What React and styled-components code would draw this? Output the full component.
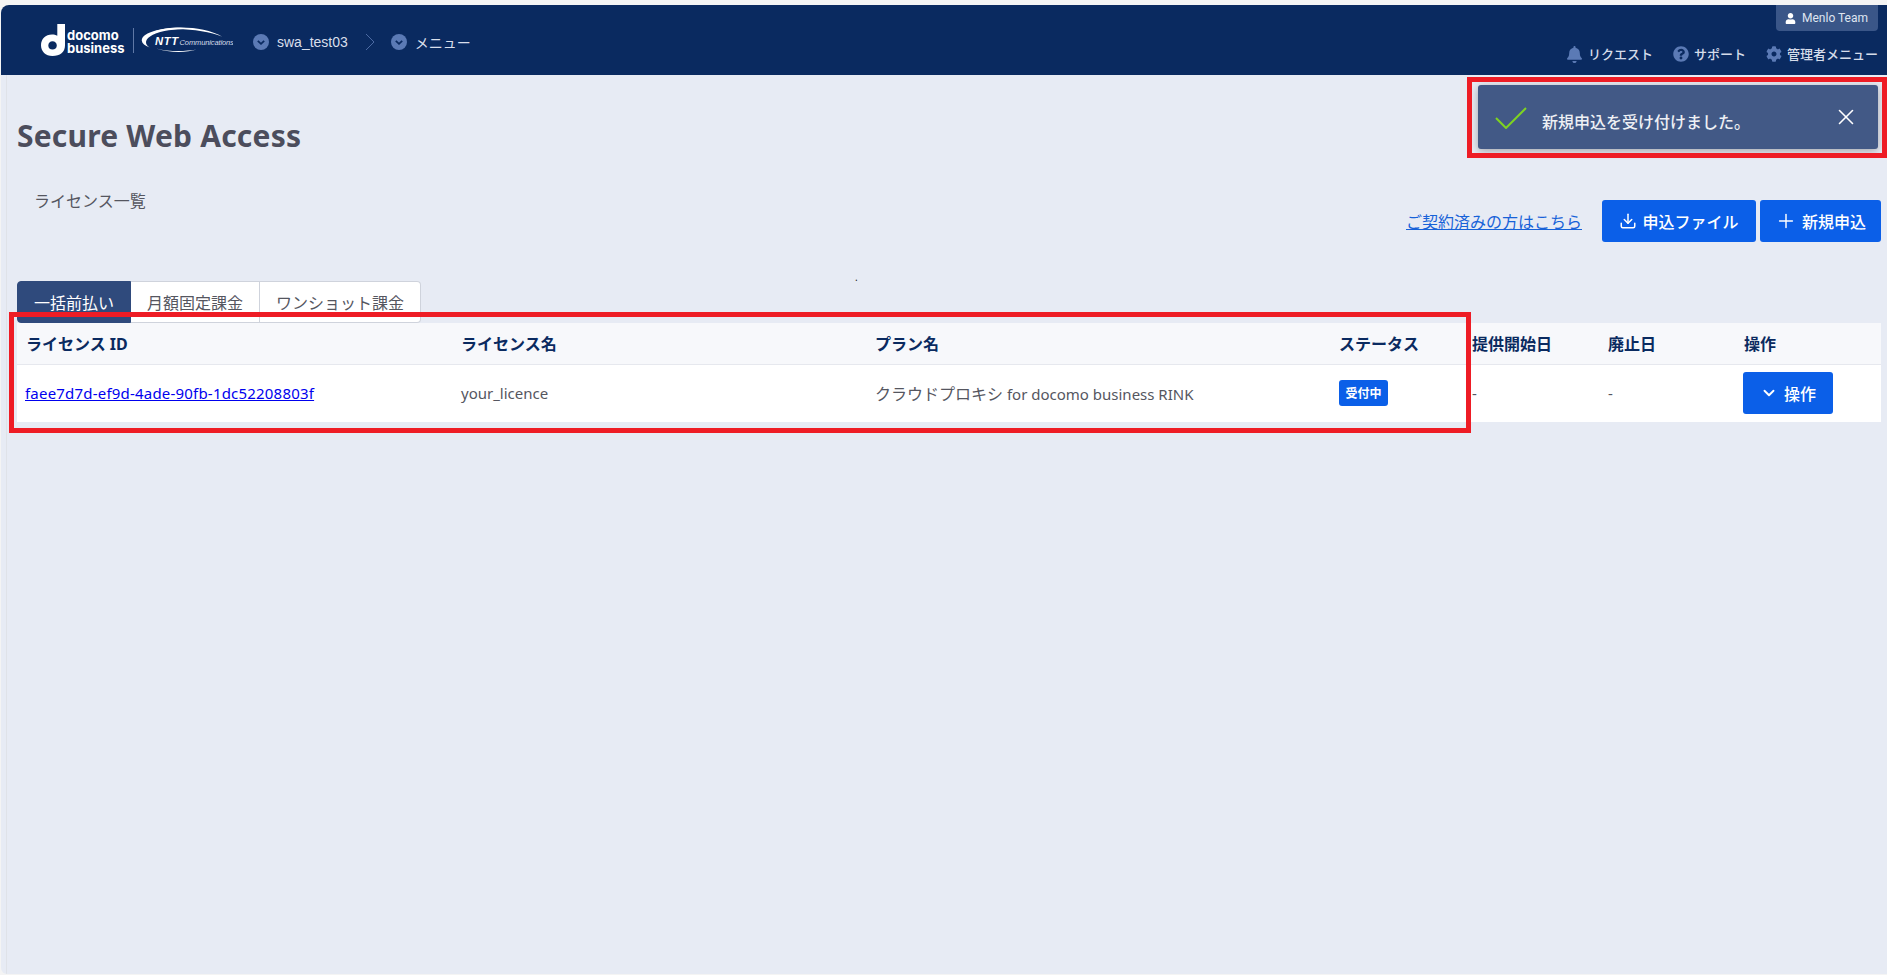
import styled, { createGlobalStyle } from "styled-components";
import { Download, Plus, ChevronDown, X } from "lucide-react";
import { FaBell, FaQuestionCircle, FaCog, FaUser } from "react-icons/fa";

const sans = `"Noto Sans", "Noto Sans CJK JP", sans-serif`;

const columns = [
  { label: "ライセンス ID", width: 435 },
  { label: "ライセンス名", width: 414 },
  { label: "プラン名", width: 464 },
  { label: "ステータス", width: 133 },
  { label: "提供開始日", width: 136 },
  { label: "廃止日", width: 136 },
  { label: "操作", width: 146 },
];

const tabs = ["一括前払い", "月額固定課金", "ワンショット課金"];

function CircleChevron() {
  return (
    <svg width="16" height="16" viewBox="0 0 16 16">
      <circle cx="8" cy="8" r="8" fill="#5b7ab5" />
      <path d="M4.8 6.8 8 9.8l3.2-3" fill="none" stroke="#0a2a60" strokeWidth="1.8" />
    </svg>
  );
}

function DocomoMark() {
  return (
    <svg width="24" height="32" viewBox="0 0 24 32">
      <path
        d="M11 10.5c2 0 3.700.4 5.300 1.300V0H24v21.500C24 28 19 32 11.500 32 4.500 32 0 27.500 0 21.300 0 15 4.500 10.500 11 10.500Zm.5 6.700c-2.500 0-4.200 1.800-4.200 4.200s1.700 4.100 4.200 4.100 4.300-1.700 4.300-4.100-1.800-4.200-4.300-4.200Z"
        fill="#fff"
        fillRule="evenodd"
      />
    </svg>
  );
}

function NttLogo() {
  return (
    <svg width="94" height="28" viewBox="0 0 88 26">
      <path
        d="M10 20C1 17 0 11 8 7 20 1 44 0 60 4 50 2 26 2 13 8 5 12 5 17 10 20Z"
        fill="#fff"
      />
      <path d="M14 5C30-1 62 0 78 10 62 3 32 1 14 5Z" fill="#fff" />
      <path d="M16 21C28 25 44 25 54 22 42 24 28 24 16 21Z" fill="#fff" />
      <text x="15" y="18" fontFamily="Liberation Sans" fontSize="10.500" fontWeight="700" fontStyle="italic" fill="#fff" letterSpacing="0.600">
        NTT
      </text>
      <text x="38" y="18" fontFamily="Liberation Sans" fontSize="7" fontStyle="italic" fill="#d6dcea" letterSpacing="-0.100">
        Communications
      </text>
    </svg>
  );
}

export default function App() {
  return (
    <>
      <GlobalStyle />
      <Page>
        <Header>
          <Brand>
            <DocomoMark />
            <BrandText>
              docomo
              <br />
              business
            </BrandText>
            <BrandDivider />
            <NttLogo />
          </Brand>
          <BreadcrumbNav>
            <CircleChevron />
            <NavLabel>swa_test03</NavLabel>
            <NavSeparator width="10" height="18" viewBox="0 0 10 18">
              <path d="M1 1l8 8-8 8" fill="none" stroke="#4c6aa3" strokeWidth="1" />
            </NavSeparator>
            <CircleChevron />
            <NavLabel>メニュー</NavLabel>
          </BreadcrumbNav>
          <HeaderRight>
            <UserChip>
              <FaUser size={11} color="#fff" />
              Menlo Team
            </UserChip>
            <HeaderLinks>
              <HeaderLink>
                <FaBell size={17} />
                <span>リクエスト</span>
              </HeaderLink>
              <HeaderLink>
                <FaQuestionCircle size={16} />
                <span>サポート</span>
              </HeaderLink>
              <HeaderLink>
                <FaCog size={16} />
                <span>管理者メニュー</span>
              </HeaderLink>
            </HeaderLinks>
          </HeaderRight>
        </Header>

        <Main>
          <Title>Secure Web Access</Title>
          <Toolbar>
            <Crumb>ライセンス一覧</Crumb>
            <Actions>
              <ContractLink href="#">ご契約済みの方はこちら</ContractLink>
              <PrimaryButton $width={154}>
                <Download size={18} strokeWidth={2} />
                申込ファイル
              </PrimaryButton>
              <PrimaryButton $width={121}>
                <Plus size={22} strokeWidth={1.600} />
                新規申込
              </PrimaryButton>
            </Actions>
          </Toolbar>
          <DotRow>.</DotRow>
          <Tabs>
            {tabs.map((tab, i) => (
              <Tab key={tab} $active={i === 0}>
                {tab}
              </Tab>
            ))}
          </Tabs>
          <Table>
            <colgroup>
              {columns.map((c) => (
                <Col key={c.label} $width={c.width} />
              ))}
            </colgroup>
            <thead>
              <tr>
                {columns.map((c) => (
                  <Th key={c.label}>{c.label}</Th>
                ))}
              </tr>
            </thead>
            <tbody>
              <tr>
                <Td>
                  <IdLink href="#">faee7d7d-ef9d-4ade-90fb-1dc52208803f</IdLink>
                </Td>
                <Td>your_licence</Td>
                <Td>
                  <Kana>クラウドプロキシ</Kana> for docomo business RINK
                </Td>
                <Td>
                  <Badge>受付中</Badge>
                </Td>
                <Td>-</Td>
                <Td>-</Td>
                <Td>
                  <RowButton>
                    <ChevronDown size={18} strokeWidth={2.500} />
                    操作
                  </RowButton>
                </Td>
              </tr>
            </tbody>
          </Table>
        </Main>

        <Toast>
          <svg width="32" height="22" viewBox="0 0 32 22">
            <path d="M1 11l10 10L31 1" fill="none" stroke="#7ed321" strokeWidth="2" />
          </svg>
          <ToastText>新規申込を受け付けました。</ToastText>
          <ToastClose>
            <X size={26} strokeWidth={1.500} />
          </ToastClose>
        </Toast>
        <Highlight $left={1467} $top={77} $width={420} $height={81} />
        <Highlight $left={9} $top={312} $width={1462} $height={121} />
      </Page>
    </>
  );
}

const GlobalStyle = createGlobalStyle`
  html, body {
    margin: 0;
    padding: 0;
    background: #f4f4f4;
  }
  * {
    box-sizing: border-box;
  }
`;

const Page = styled.div`
  position: relative;
  display: flex;
  flex-direction: column;
  width: 1887px;
  height: 975px;
  padding: 5px 0 1px 1px;
  overflow: hidden;
  font-family: ${sans};
`;

const Header = styled.header`
  display: flex;
  flex: none;
  height: 70px;
  padding-left: 40px;
  background: #0a2a60;
  border-top-left-radius: 8px;
`;

const Brand = styled.div`
  display: flex;
  align-items: center;
  height: 70px;
`;

const BrandText = styled.div`
  width: 63px;
  margin-left: 2px;
  padding-top: 3px;
  font-family: "Inter", sans-serif;
  font-size: 13px;
  font-weight: 700;
  line-height: 13px;
  color: #fff;
`;

const BrandDivider = styled.div`
  width: 1px;
  height: 25px;
  margin: 0 5px 0 3px;
  background: #5f78a6;
`;

const BreadcrumbNav = styled.nav`
  display: flex;
  align-items: center;
  gap: 8px;
  margin-left: 20px;
  padding-top: 4px;
  height: 70px;
`;

const NavLabel = styled.span`
  font-family: "Liberation Sans", "Noto Sans CJK JP", sans-serif;
  font-size: 14px;
  color: #d9dfeb;
`;

const NavSeparator = styled.svg`
  margin: 0 8px 0 9px;
`;

const HeaderRight = styled.div`
  display: flex;
  flex-direction: column;
  align-items: flex-end;
  margin-left: auto;
  padding-right: 9px;
`;

const UserChip = styled.div`
  display: flex;
  align-items: center;
  gap: 6px;
  width: 102px;
  height: 26px;
  padding-left: 9px;
  background: #3a5688;
  border-radius: 0 0 4px 4px;
  font-family: "Roboto", sans-serif;
  font-size: 12px;
  color: #dfe5f0;
`;

const HeaderLinks = styled.div`
  display: flex;
  align-items: center;
  gap: 20px;
  margin-top: 13px;
`;

const HeaderLink = styled.div`
  display: flex;
  align-items: center;
  gap: 5px;
  font-size: 13px;
  font-weight: 500;
  color: #d5dcea;
  line-height: 20px;
  svg {
    color: #5b7ab5;
  }
`;

const Main = styled.main`
  flex: 1;
  padding: 41px 6px 0 16px;
  background: linear-gradient(
    to right,
    #e7ebf4 5px,
    #dfe2e8 5px,
    #dfe2e8 6px,
    #e7ebf4 6px
  );
  border-bottom-left-radius: 6px;
`;

const Title = styled.h1`
  margin: 0;
  font-size: 30px;
  font-weight: 700;
  line-height: 40px;
  letter-spacing: 0.200px;
  color: #4c4d5c;
`;

const Toolbar = styled.div`
  display: flex;
  justify-content: space-between;
  margin-top: 33px;
`;

const Crumb = styled.div`
  padding-left: 17px;
  font-size: 16px;
  line-height: 24px;
  color: #55565f;
`;

const Actions = styled.div`
  display: flex;
  align-items: center;
  gap: 4px;
  margin-top: 11px;
`;

const ContractLink = styled.a`
  margin-right: 16px;
  font-size: 16px;
  color: #1762d8;
  text-decoration: underline;
`;

const PrimaryButton = styled.button`
  display: flex;
  align-items: center;
  justify-content: center;
  gap: 5px;
  width: ${(props) => props.$width}px;
  height: 42px;
  padding: 0;
  border: none;
  border-radius: 3px;
  background: #0b5fe8;
  color: #fff;
  font-family: ${sans};
  font-size: 16px;
  font-weight: 500;
`;

const DotRow = styled.div`
  height: 39px;
  padding-left: 838px;
  font-size: 10px;
  line-height: 70px;
  color: #222;
`;

const Tabs = styled.div`
  display: flex;
  height: 42px;
`;

const Tab = styled.div`
  display: flex;
  align-items: center;
  justify-content: center;
  padding: 0 16px;
  font-size: 16px;
  background: ${(props) => (props.$active ? "#2f4a7c" : "#fff")};
  color: ${(props) => (props.$active ? "#fff" : "#55565f")};
  border: 1px solid ${(props) => (props.$active ? "#2f4a7c" : "#cfd3dc")};
  border-left-width: ${(props) => (props.$active ? "1px" : "0")};
  border-radius: ${(props) => (props.$active ? "4px 0 0 4px" : "0")};
  &:last-child {
    border-radius: 0 4px 4px 0;
  }
`;

const Table = styled.table`
  width: 1864px;
  table-layout: fixed;
  border-collapse: collapse;
  background: #fff;
`;

const Col = styled.col`
  width: ${(props) => props.$width}px;
`;

const Th = styled.th`
  height: 41px;
  padding: 0 0 0 9px;
  text-align: left;
  font-size: 16px;
  font-weight: 700;
  color: #0a2a60;
  background: #f7f8fb;
  border-bottom: 1px solid #e6e8ee;
`;

const Td = styled.td`
  height: 58px;
  padding: 0 0 0 9px;
  font-size: 15px;
  color: #55565f;
`;

const Kana = styled.span`
  font-size: 16px;
`;

const IdLink = styled.a`
  margin-left: -1px;
  color: #0000ee;
  text-decoration: underline;
  letter-spacing: 0.200px;
`;

const Badge = styled.span`
  display: inline-flex;
  align-items: center;
  justify-content: center;
  width: 49px;
  height: 26px;
  border-radius: 3px;
  background: #0b5fe8;
  color: #fff;
  font-size: 12px;
  font-weight: 700;
`;

const RowButton = styled.button`
  display: flex;
  align-items: center;
  justify-content: center;
  gap: 6px;
  width: 90px;
  height: 42px;
  margin-left: -1px;
  padding: 0;
  border: none;
  border-radius: 3px;
  background: #0b5fe8;
  color: #fff;
  font-family: ${sans};
  font-size: 16px;
  font-weight: 500;
`;

const Toast = styled.div`
  position: absolute;
  top: 85px;
  left: 1478px;
  display: flex;
  width: 400px;
  height: 64px;
  padding: 22px 0 0 17px;
  background: #425986;
  border-radius: 3px;
  box-shadow: 0 2px 8px rgba(0, 0, 0, 0.300);
`;

const ToastText = styled.div`
  margin: 4px 0 0 15px;
  font-size: 16px;
  font-weight: 500;
  line-height: 22px;
  color: #eef0f4;
`;

const ToastClose = styled.div`
  position: absolute;
  top: 19px;
  right: 19px;
  color: #fff;
`;

const Highlight = styled.div`
  position: absolute;
  top: ${(props) => props.$top}px;
  left: ${(props) => props.$left}px;
  width: ${(props) => props.$width}px;
  height: ${(props) => props.$height}px;
  border: 5px solid #ee1c25;
  pointer-events: none;
`;
